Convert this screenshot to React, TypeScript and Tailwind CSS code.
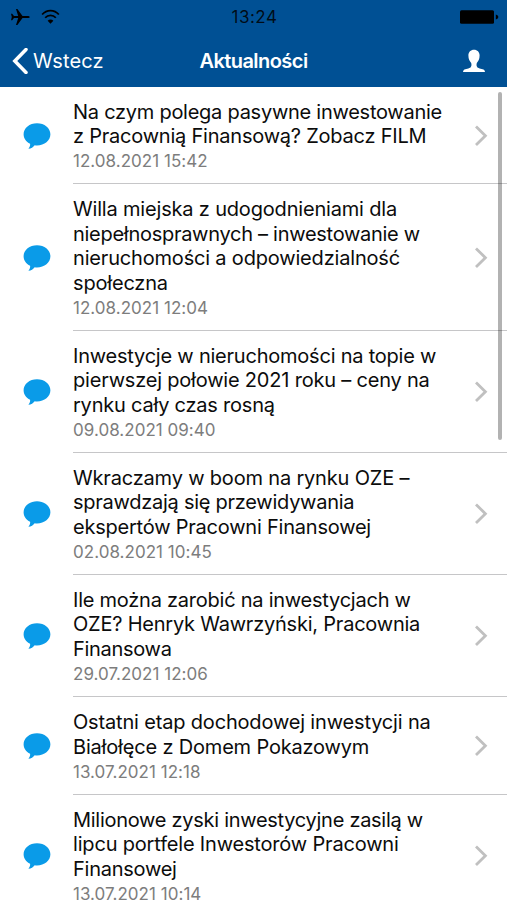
import React from "react";
import clsx from "clsx";

interface Line {
  text: string;
  tracking: string;
}

interface NewsItem {
  lines: Line[];
  date: string;
}

const news: NewsItem[] = [
  {
    lines: [
      { text: "Na czym polega pasywne inwestowanie", tracking: "tracking-[-0.26px]" },
      { text: "z Pracownią Finansową? Zobacz FILM", tracking: "tracking-[-0.22px]" },
    ],
    date: "12.08.2021 15:42",
  },
  {
    lines: [
      { text: "Willa miejska z udogodnieniami dla", tracking: "tracking-[-0.18px]" },
      { text: "niepełnosprawnych – inwestowanie w", tracking: "tracking-[-0.28px]" },
      { text: "nieruchomości a odpowiedzialność", tracking: "tracking-[-0.18px]" },
      { text: "społeczna", tracking: "tracking-[-0.18px]" },
    ],
    date: "12.08.2021 12:04",
  },
  {
    lines: [
      { text: "Inwestycje w nieruchomości na topie w", tracking: "tracking-[-0.22px]" },
      { text: "pierwszej połowie 2021 roku – ceny na", tracking: "tracking-[-0.2px]" },
      { text: "rynku cały czas rosną", tracking: "tracking-[-0.22px]" },
    ],
    date: "09.08.2021 09:40",
  },
  {
    lines: [
      { text: "Wkraczamy w boom na rynku OZE –", tracking: "tracking-[-0.18px]" },
      { text: "sprawdzają się przewidywania", tracking: "tracking-[-0.26px]" },
      { text: "ekspertów Pracowni Finansowej", tracking: "tracking-[-0.22px]" },
    ],
    date: "02.08.2021 10:45",
  },
  {
    lines: [
      { text: "Ile można zarobić na inwestycjach w", tracking: "tracking-[-0.24px]" },
      { text: "OZE? Henryk Wawrzyński, Pracownia", tracking: "tracking-[-0.22px]" },
      { text: "Finansowa", tracking: "tracking-[-0.3px]" },
    ],
    date: "29.07.2021 12:06",
  },
  {
    lines: [
      { text: "Ostatni etap dochodowej inwestycji na", tracking: "tracking-[-0.17px]" },
      { text: "Białołęce z Domem Pokazowym", tracking: "tracking-[-0.18px]" },
    ],
    date: "13.07.2021 12:18",
  },
  {
    lines: [
      { text: "Milionowe zyski inwestycyjne zasilą w", tracking: "tracking-[-0.28px]" },
      { text: "lipcu portfele Inwestorów Pracowni", tracking: "tracking-[-0.18px]" },
      { text: "Finansowej", tracking: "tracking-[-0.26px]" },
    ],
    date: "13.07.2021 10:14",
  },
];

function StatusBar() {
  return (
    <div className="grid h-[34px] grid-cols-[1fr_auto_1fr] items-center pr-[8px] pl-[10px] text-black">
      <div className="flex items-center gap-[11px]">
        <svg width="20" height="18" viewBox="0 0 20 18" fill="currentColor">
          <path d="M19.8 9c0-.7-1-1.1-2.3-1.1h-5L7.4 1H6l2.2 6.900H4L2.200 5.800H1L1.800 9 1 12.200h1.200L4 10.100h4.200L6 17h1.400l5.100-6.900h5c1.300 0 2.300-.4 2.300-1.100Z" />
        </svg>
        <svg width="19" height="16" viewBox="0 0 20 16" fill="none" stroke="currentColor" strokeWidth="1.9">
          <path d="M1.2 5.4C6-.1 14-.1 18.8 5.4M4.4 8.8c3-3.4 8.2-3.4 11.2 0" />
          <path d="m10 15-3-3.1c1.6-1.7 4.4-1.7 6 0Z" fill="currentColor" stroke="none" />
        </svg>
      </div>
      <div className="pt-[1px] text-center text-[17px] tracking-[0.5px] text-black/85">13:24</div>
      <svg className="justify-self-end" width="39" height="14" viewBox="0 0 39 14" fill="currentColor">
        <rect x="0" y="0.3" width="34" height="13.4" rx="1.5" />
        <path d="M35.8 4.5c1.7.5 2.5 1.4 2.5 2.5s-.8 2-2.5 2.5Z" />
      </svg>
    </div>
  );
}

function Header() {
  return (
    <header className="h-[87px] bg-[#005094]">
      <StatusBar />
      <div className="grid h-[53px] grid-cols-[1fr_auto_1fr] items-center px-[12px] text-white">
        <div className="flex items-center gap-[5px]">
          <svg width="16" height="26" viewBox="0 0 16 26" fill="none" stroke="currentColor" strokeWidth="3.5">
            <path d="M14 1.5 2.8 13 14 24.5" strokeLinecap="round" />
          </svg>
          <span className="text-[20px] tracking-[0.15px]">Wstecz</span>
        </div>
        <h1 className="text-center text-[20px] font-semibold tracking-[-0.55px]">Aktualności</h1>
        <svg className="mr-[9px] justify-self-end" width="24" height="24" viewBox="0 0 24 24" fill="currentColor">
          <path d="M12 .8c-3.300 0-5.600 2.200-5.600 5.800 0 3.500 1.300 5.900 2.800 7.400.5 1.800.3 3.200-.5 4.200C7.500 19.700 3.300 19.500 1.800 21c-.5.500-.7 1.200-.8 2h22c-.1-.8-.3-1.500-.8-2-1.500-1.500-5.700-1.300-6.900-2.800-.8-1-1-2.400-.5-4.200 1.500-1.500 2.800-3.900 2.800-7.400C17.600 3 15.300.8 12 .8Z" />
        </svg>
      </div>
    </header>
  );
}

function NewsRow({ item, first }: { item: NewsItem; first: boolean }) {
  return (
    <li className="flex items-center">
      <svg className="mr-[22px] ml-[23px] shrink-0" width="28" height="28" viewBox="0 0 28 28" fill="#0a9be8">
        <path d="M14 1.200C6.500 1.200.6 6 .6 12.300c0 4 2.400 7.500 6.500 9.500.3 1.700-.4 3.500-1.700 5 2.700-.2 4.900-1.500 6.300-3.500.8.1 1.500.2 2.300.2 7.500 0 13.400-4.900 13.400-11.200S21.500 1.200 14 1.200Z" />
      </svg>
      <div className={clsx("flex-1 border-b border-[#c6c6c8] pb-[9.9px]", first ? "pt-[12.6px]" : "pt-[13px]")}>
        <div className="flex items-center justify-between">
          <div>
            <h2 className="text-[20px] leading-[24.4px] text-[#0c0c0c]">
              {item.lines.map((line) => (
                <span key={line.text} className={clsx("block whitespace-nowrap", line.tracking)}>
                  {line.text}
                </span>
              ))}
            </h2>
            <p className="pt-[2px] text-[17px] leading-[23px] tracking-[0.03px] text-[#7d7d7d]">{item.date}</p>
          </div>
          <svg className="mr-[18px] mb-[2px] shrink-0" width="16" height="24" viewBox="0 0 16 24" fill="none" stroke="#c0c0c0" strokeWidth="2.8">
            <path d="m3 2.4 9.4 9.3L3 21" />
          </svg>
        </div>
      </div>
    </li>
  );
}

export default function App() {
  return (
    <div className="relative h-[900px] w-[507px] overflow-hidden bg-white font-['Inter',sans-serif]">
      <Header />
      <ul>
        {news.map((item, i) => (
          <NewsRow key={item.date} item={item} first={i === 0} />
        ))}
      </ul>
      {/* Scroll indicator */}
      <div className="absolute top-[92px] right-[5px] h-[348px] w-[4px] rounded-full bg-black/30" />
    </div>
  );
}
